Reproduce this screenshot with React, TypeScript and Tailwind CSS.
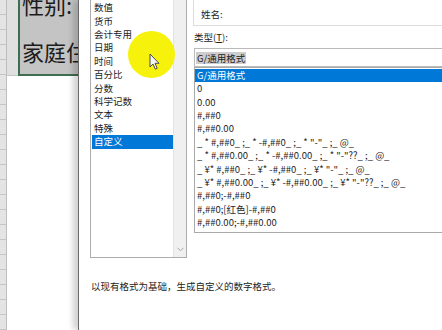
import React from "react";

const cats = ["常规", "数值", "货币", "会计专用", "日期", "时间", "百分比", "分数", "科学记数", "文本", "特殊", "自定义"];
const fmts = [
  "G/通用格式",
  "0",
  "0.00",
  "#,##0",
  "#,##0.00",
  '_ * #,##0_ ;_ * -#,##0_ ;_ * "-"_ ;_ @_',
  '_ * #,##0.00_ ;_ * -#,##0.00_ ;_ * "-"??_ ;_ @_',
  '_ ¥* #,##0_ ;_ ¥* -#,##0_ ;_ ¥* "-"_ ;_ @_',
  '_ ¥* #,##0.00_ ;_ ¥* -#,##0.00_ ;_ ¥* "-"??_ ;_ @_',
  "#,##0;-#,##0",
  "#,##0;[红色]-#,##0",
  "#,##0.00;-#,##0.00",
];

export default function App() {
  return (
    <div
      className="w-[442px] h-[330px] overflow-hidden relative flex bg-white text-[#1c1c1c]"
      style={{ fontFamily: '"Noto Sans CJK SC", "Noto Sans", sans-serif' }}
    >
      {/* Excel background */}
      <div className="w-[78px] shrink-0 flex">
        <div className="w-[7px] shrink-0 bg-[#e4e4e4] border-r border-[#bdbdbd] flex flex-col">
          {Array.from({ length: 22 }).map((_, i) => (
            <div key={i} className="h-[15px] shrink-0 border-b border-[#c6c6c6]" />
          ))}
        </div>
        <div className="flex-1 flex flex-col">
          <div className="h-[76px] flex">
            <div className="w-[11px] bg-[#e0e0e0] border-b border-[#c6c6c6]" />
            <div className="flex-1 bg-[#c4c4c4] border-l-2 border-b-2 border-[#3e6e52] overflow-hidden whitespace-nowrap pl-[2px]">
              <div className="text-[22px] leading-[30px] -mt-[11px]">性别:</div>
              <div className="text-[22px] leading-[30px] mt-[17px]">家庭住址</div>
            </div>
          </div>
          <div className="flex-1 bg-white" />
        </div>
      </div>

      {/* Dialog */}
      <div className="flex-1 relative border-l border-[#6b6b6b] bg-white shadow-[-5px_0_6px_rgba(0,0,0,0.18)] flex flex-col pl-[11px] text-[9.5px]">
        <div className="h-[258px] flex items-start shrink-0">
          {/* category list */}
          <div className="w-[97px] h-[274px] -mt-[16px] border border-[#adadad] flex shrink-0 bg-white">
            <div className="flex-1 pt-[2.9px] flex flex-col">
              {cats.map((c) => (
                <div
                  key={c}
                  className={
                    "h-[13.4px] leading-[13.4px] pl-[2px] ml-[1px] whitespace-nowrap " +
                    (c === "自定义" ? "bg-[#0078d7] text-white" : "")
                  }
                >
                  {c}
                </div>
              ))}
            </div>
            <div className="w-[13px] bg-[#f0f0f0] border-l border-[#e2e2e2] flex flex-col justify-end items-center pb-[5px]">
              <svg width="7" height="5" viewBox="0 0 7 5">
                <path d="M0.5 0.8 L3.5 3.8 L6.5 0.8" fill="none" stroke="#a6a6a6" strokeWidth="1" />
              </svg>
            </div>
          </div>

          {/* right column */}
          <div className="ml-[6px] w-[300px] shrink-0 flex flex-col">
            <div className="-mt-[20px] h-[46px] border-l border-b border-[#dcdcdc] flex items-end pb-[4px] pl-[7px]">
              <span className="leading-[13px]">姓名:</span>
            </div>
            <div className="mt-[4.5px] h-[13px] leading-[13px] pl-[1px]">
              类型(<span className="underline">T</span>):
            </div>
            <div className="mt-[4.5px] ml-[1px] h-[19px] border border-[#bababa] flex items-center pl-[1px]">
              <span className="bg-[#cdcdcd] leading-[12px] px-[1px]">G/通用格式</span>
            </div>
            <div className="ml-[1px] h-[166px] border border-[#a9a9a9] pt-[0.8px] flex flex-col overflow-hidden">
              {fmts.map((f, i) => (
                <div
                  key={i}
                  className={
                    "h-[13.4px] leading-[13.4px] pl-[2px] whitespace-pre shrink-0 " +
                    (i === 0 ? "bg-[#0078d7] text-white" : "")
                  }
                >
                  {f}
                </div>
              ))}
            </div>
          </div>
        </div>
        <div className="mt-[21.5px] h-[13px] leading-[13px] pl-[1px] whitespace-nowrap">
          以现有格式为基础，生成自定义的数字格式。
        </div>
      </div>

      {/* cursor highlight */}
      <div className="absolute left-[128px] top-[31px] w-[47px] h-[47px] rounded-full bg-[#f6f20c] blur-[0.6px]" />
      <svg className="absolute left-[149px] top-[53px]" width="12" height="18" viewBox="0 0 12 18">
        <path
          d="M1 1 L1 14 L4 11 L6.3 16.2 L8.2 15.3 L6 10.3 L10 10.3 Z"
          fill="#f4f4f4"
          stroke="#4a4a4a"
          strokeWidth="1"
          strokeLinejoin="round"
        />
      </svg>
    </div>
  );
}
